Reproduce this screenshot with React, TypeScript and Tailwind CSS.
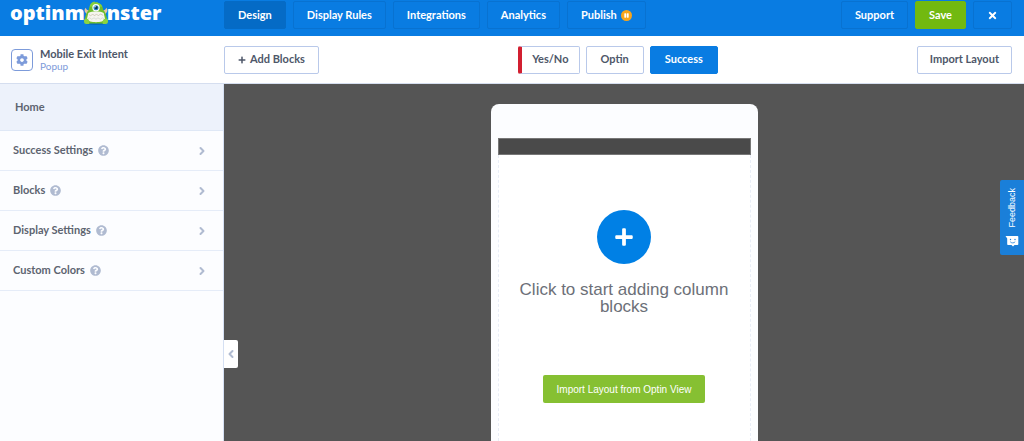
import { useState } from 'react';
import { ChevronLeft, ChevronRight } from 'lucide-react';
import { FaCog, FaPause, FaPlus, FaQuestionCircle, FaTimes } from 'react-icons/fa';

const navItems = [
  { label: 'Design', paused: false },
  { label: 'Display Rules', paused: false },
  { label: 'Integrations', paused: false },
  { label: 'Analytics', paused: false },
  { label: 'Publish', paused: true },
];

const panels = ['Success Settings', 'Blocks', 'Display Settings', 'Custom Colors'];

const views = ['Yes/No', 'Optin', 'Success'];

const navButton = 'flex h-7 items-center justify-center rounded-xs border px-[13px] font-bold text-white';
const toolButton = 'flex h-7 items-center justify-center rounded-xs border font-bold';
const outline = 'border-[#b9c9ea] bg-white text-[#4e5769]';

function Monster() {
  return (
    <svg viewBox="0 0 26 26" className="-mx-0.5 h-[25px] w-[26px] shrink-0" aria-hidden="true">
      <ellipse cx="13" cy="23.500" rx="11" ry="1.500" fill="#0867bd" />
      <path d="M2 12c-1.500-2-1-4 .5-5 .2 2 1.500 2.500 4 3l-1 4C4 14 3 13.500 2 12zM24 12c1.500-2 1-4-.5-5-.2 2-1.500 2.500-4 3l1 4c1.500 0 2.500-.5 3.500-2z" fill="#e3c3a4" />
      <path d="M13 2C8 2 6 5 5.500 9 3 12 1.500 16 1.500 20c0 2 1.500 3.500 3.500 3.500h16c2 0 3.500-1.500 3.500-3.500 0-4-1.500-8-4-11C20 5 18 2 13 2z" fill="#6fbe2b" />
      <path d="M6.500 6c0-3 2.500-5 5.500-5.500l-.5 1L15 1l-.5 1C17 2 19.500 4 19.500 6z" fill="#86d03b" />
      <path d="M5 12.500c4-2 12-2 16 0l1.500 6.500c-2 4-17 4-19 0z" fill="#f5f5ee" />
      <path d="M5.500 14l2 1.500 2-2 2 2 2-2 2 2 2-2 3 1.500" fill="none" stroke="#c2b9a0" strokeWidth=".7" />
      <path d="M4.500 18.500l2-1 2 1.500 2.500-1.500 2 1.500 2-1.500 2.500 1.500 2-1.500 2 1" fill="none" stroke="#ccd2c9" strokeWidth=".7" />
      <circle cx="13" cy="7" r="3.800" fill="#fff" />
      <circle cx="13" cy="7" r="2.600" fill="#2687c9" />
      <circle cx="13.200" cy="7" r="1.500" fill="#123350" />
      <circle cx="12" cy="6" r=".7" fill="#fff" />
      <path d="M.5 20.500c0-3 4-3 5.500 0V24H3C1 24 .5 22.500.5 20.500zM25.500 20.500c0-3-4-3-5.500 0V24h3c2 0 2.500-1.500 2.500-3.500z" fill="#8bd43f" />
    </svg>
  );
}

function FeedbackIcon() {
  return (
    <svg viewBox="0 0 14 12" className="h-3 w-3.5" aria-hidden="true">
      <path d="M.5 1h12a.8.8 0 0 1 .8.8v7.400a.8.8 0 0 1-.8.8H9.500L8 11.500 6.500 10H3a.8.8 0 0 1-.8-.8V3.500z" fill="#fff" />
      <circle cx="5.500" cy="4.500" r=".7" fill="#1a7fd9" />
      <circle cx="10" cy="4.500" r=".7" fill="#1a7fd9" />
      <path d="M5.200 6.700c1 1.600 4 1.600 5 0" fill="none" stroke="#1a7fd9" strokeWidth=".8" />
    </svg>
  );
}

export default function App() {
  const [activeNav, setActiveNav] = useState('Design');
  const [activeView, setActiveView] = useState('Success');

  return (
    <div className="flex min-h-screen flex-col bg-white font-['Lato',sans-serif] text-[11px]">
      <header className="flex h-9 items-start bg-[#097ce2] pr-3">
        <a
          href="#"
          aria-label="optinmonster"
          className="flex h-[26px] w-56 shrink-0 items-center pl-2.5 font-['Open_Sans',sans-serif] text-xl leading-6 font-extrabold text-white"
        >
          <span>optinm</span>
          <Monster />
          <span>nster</span>
        </a>
        <nav className="flex gap-[7px] pt-px">
          {navItems.map((item) => (
            <button
              key={item.label}
              onClick={() => setActiveNav(item.label)}
              className={`${navButton} ${
                activeNav === item.label ? 'border-[#056bc6] bg-[#056bc6]' : 'border-[#0872d1]'
              }`}
            >
              {item.label}
              {item.paused && (
                <span className="ml-1 flex h-[11px] w-[11px] items-center justify-center rounded-full bg-[#f9a51b]">
                  <FaPause className="h-[5px] w-[5px]" />
                </span>
              )}
            </button>
          ))}
        </nav>
        <div className="ml-auto flex gap-[7px] pt-px">
          <button className={`${navButton} border-[#0872d1]`}>Support</button>
          <button className={`${navButton} border-[#72b910] bg-[#72b910]`}>Save</button>
          <button aria-label="Close" className={`${navButton} border-[#0872d1]`}>
            <FaTimes className="h-[11px] w-[11px]" />
          </button>
        </div>
      </header>

      <div className="flex h-12 items-center border-b border-[#d5deef] pr-3">
        <div className="flex w-56 shrink-0 items-center gap-[7px] pl-[11px]">
          <span className="flex h-[22px] w-[22px] items-center justify-center rounded-sm border border-[#7d9bda] text-[#7d9bda]">
            <FaCog className="h-3 w-3" />
          </span>
          <div className="leading-3">
            <h1 className="font-bold text-[#4e5769]">Mobile Exit Intent</h1>
            <p className="text-[10px] text-[#7d9bda]">Popup</p>
          </div>
        </div>
        <div className="grid flex-1 grid-cols-[1fr_auto_1fr] items-center">
          <button className={`${toolButton} ${outline} justify-self-start px-[13px]`}>
            <FaPlus className="mr-1 h-2 w-2" />
            Add Blocks
          </button>
          <div className="flex gap-1.5">
            {views.map((view) => (
              <button
                key={view}
                onClick={() => setActiveView(view)}
                className={`${toolButton} ${
                  activeView === view ? 'border-[#097ce2] bg-[#097ce2] text-white' : outline
                } ${view === 'Yes/No' ? 'border-l-4 border-l-[#d21f30] px-2.5' : 'px-3.5'}`}
              >
                {view}
              </button>
            ))}
          </div>
          <button className={`${toolButton} ${outline} justify-self-end px-3`}>Import Layout</button>
        </div>
      </div>

      <div className="flex flex-1">
        <aside className="w-56 shrink-0 border-r border-[#d5e0f3] bg-[#fcfdff] font-bold text-[#5d6470]">
          <h2 className="flex h-[47px] items-center border-b border-[#dfe8f6] bg-[#edf2fb] px-[15px]">Home</h2>
          {panels.map((panel) => (
            <button key={panel} className="flex h-10 w-full items-center border-b border-[#e5ecf8] pr-[15px] pl-[13px]">
              {panel}
              <FaQuestionCircle className="ml-[5px] h-[11px] w-[11px] text-[#b0bbd1]" />
              <ChevronRight strokeWidth={4} className="ml-auto h-3 w-3 text-[#b0bbd1]" />
            </button>
          ))}
        </aside>

        <main className="relative flex flex-1 justify-center bg-[#555] pt-5">
          <button
            aria-label="Collapse sidebar"
            className="absolute top-64 left-0 flex h-7 w-3.5 items-center justify-center rounded-r-xs bg-white text-[#b0bbd1]"
          >
            <ChevronLeft strokeWidth={4} className="h-3 w-3" />
          </button>

          <section className="flex w-[267px] flex-col rounded-t-lg bg-[#fcfdff] px-[7px] pt-[34px]">
            <div className="h-[17px] border border-[#777] bg-[#4a4a4a]" />
            <div className="flex flex-1 flex-col items-center border-x border-dashed border-[#e8edf7] bg-white pt-[55px] font-['Liberation_Sans',sans-serif]">
              <button
                aria-label="Add column blocks"
                className="flex h-[54px] w-[54px] items-center justify-center rounded-full bg-[#0080e5] text-white"
              >
                <FaPlus className="h-5 w-5" />
              </button>
              <p className="mt-[17px] w-56 text-center text-[17px] leading-[17px] text-[#6c7078]">
                Click to start adding column blocks
              </p>
              <button className="mt-[60px] flex h-7 items-center rounded-xs bg-[#86c032] px-3.5 text-[10px] text-white">
                Import Layout from Optin View
              </button>
            </div>
          </section>
        </main>
      </div>

      <button className="fixed top-[180px] right-0 flex h-[75px] w-6 flex-col items-center justify-between rounded-l-xs bg-[#1a7fd9] py-2 font-['Liberation_Sans',sans-serif] text-white">
        <span className="rotate-180 text-[9px] leading-3 [writing-mode:vertical-rl]">Feedback</span>
        <FeedbackIcon />
      </button>
    </div>
  );
}
